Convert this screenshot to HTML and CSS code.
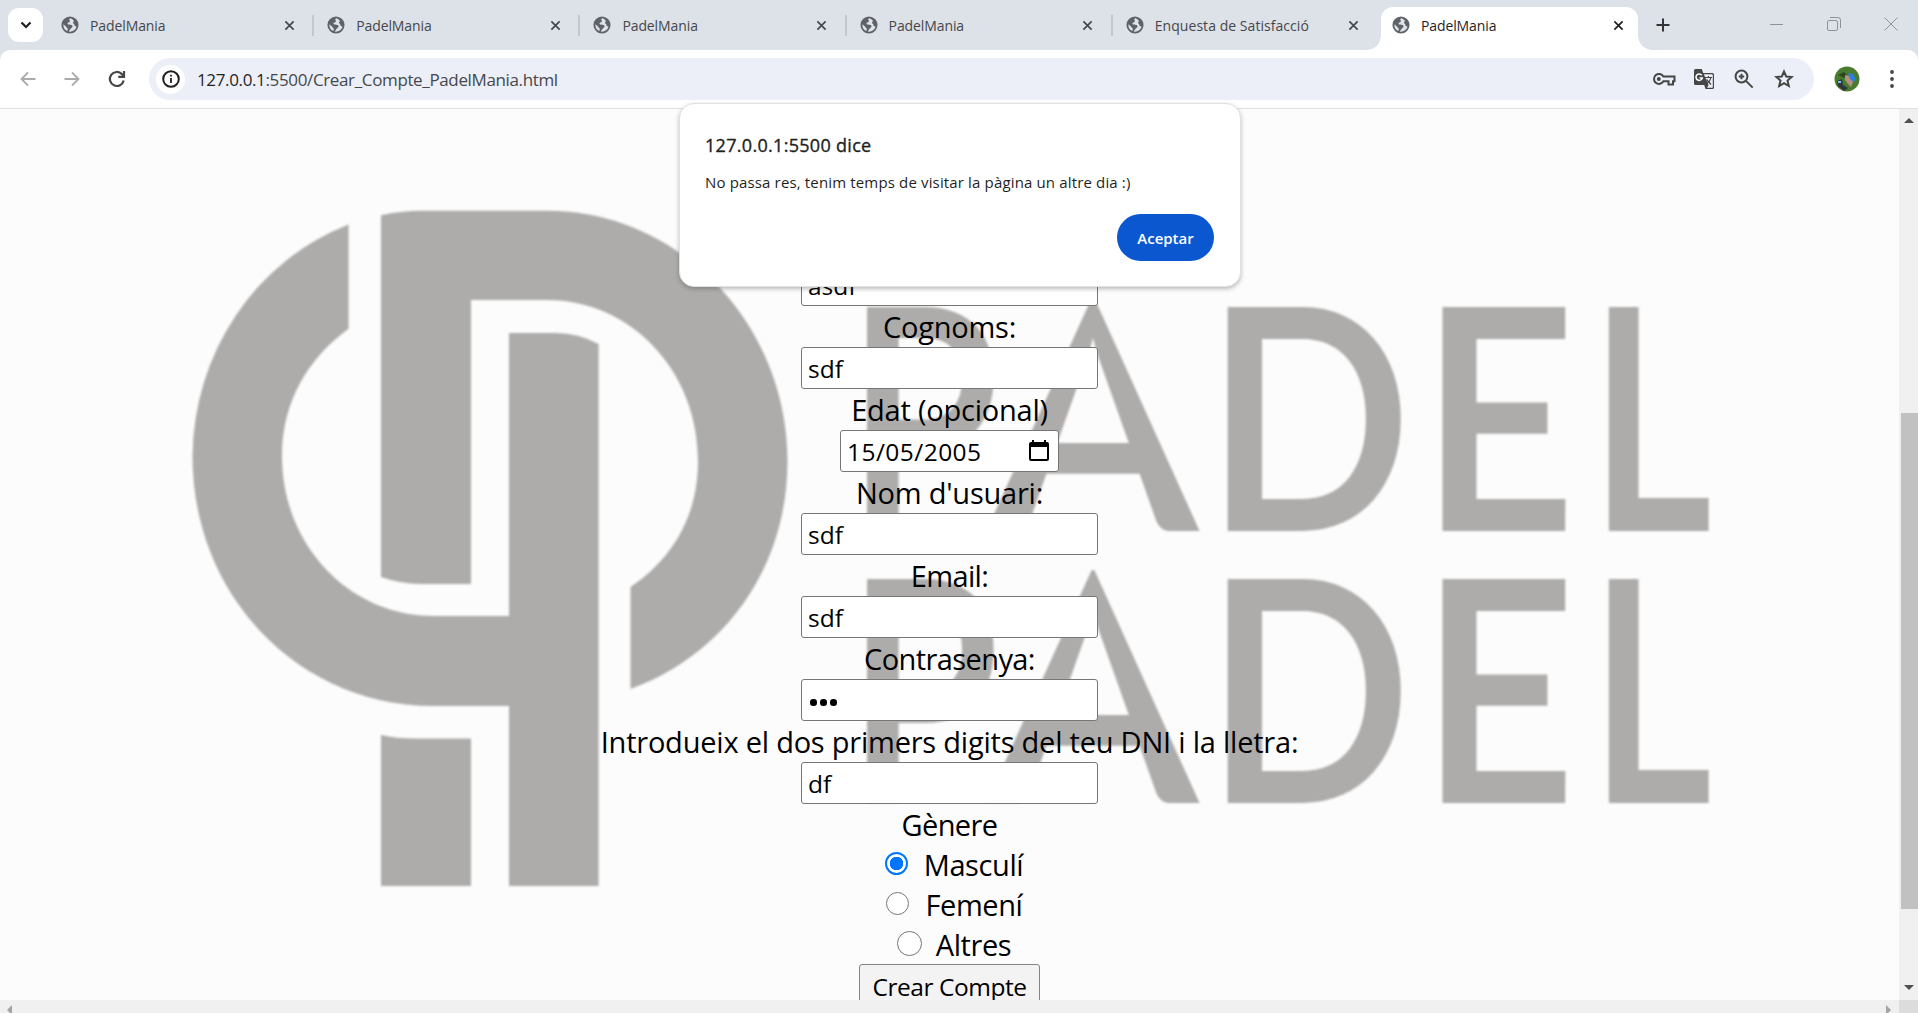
FILE: index.html
```html
<!DOCTYPE html>
<html lang="ca">
<head>
<meta charset="utf-8">
<title>PadelMania</title>
<link rel="stylesheet" href="styles.css">
</head>
<body>
<svg width="0" height="0" class="defs" aria-hidden="true">
  <symbol id="globe" viewBox="0 0 20 20"><circle cx="10" cy="10" r="9.500" fill="#5f6368"/><path d="M10.500 2.500C8 3.500 10.200 5 9.800 6 9.200 7.300 7.300 6.800 7.200 8.300c0 1.700 3 1.200 4.600 1.700 1.500.6 1.200 2.500-.2 3.200-1.200.7-1.400 1.700-2.300 2.900l-.5 1.300c3.800.5 7.500-1.600 8.500-5.400L15.500 11.200c-1-.8-.2-2.200-1.700-2.800-1-.5-.4-1.900.7-2.500C13.300 3.600 12 3 10.500 2.500zM2.700 9.200c-.4 3.500 1.300 6.500 4.500 7.600l.3-2.300c.1-1.300-1.700-1.500-2-2.700z" fill="#dee2e9"/></symbol>
  <symbol id="cross" viewBox="0 0 12 12"><path d="M1.500 1.500l9 9M10.500 1.500l-9 9" stroke="currentColor" stroke-width="1.800" fill="none"/></symbol>
</svg>
<header class="tabstrip">
  <button class="tab-search"><svg width="12" height="8" viewBox="0 0 12 8"><path d="M1.500 1.500L6 6l4.500-4.500" fill="none" stroke="#1f1f1f" stroke-width="2.200"/></svg></button>
  <div class="tab"><svg class="fav"><use href="#globe"/></svg><span>PadelMania</span><svg class="x"><use href="#cross"/></svg></div>
  <div class="tab"><svg class="fav"><use href="#globe"/></svg><span>PadelMania</span><svg class="x"><use href="#cross"/></svg></div>
  <div class="tab"><svg class="fav"><use href="#globe"/></svg><span>PadelMania</span><svg class="x"><use href="#cross"/></svg></div>
  <div class="tab"><svg class="fav"><use href="#globe"/></svg><span>PadelMania</span><svg class="x"><use href="#cross"/></svg></div>
  <div class="tab last"><svg class="fav"><use href="#globe"/></svg><span class="survey">Enquesta de Satisfacció</span><svg class="x"><use href="#cross"/></svg></div>
  <div class="tab active"><svg class="fav"><use href="#globe"/></svg><span>PadelMania</span><svg class="x"><use href="#cross"/></svg></div>
  <svg class="plus" width="14" height="14" viewBox="0 0 14 14"><path d="M7 .5v13M.5 7h13" stroke="#333" stroke-width="2"/></svg>
  <div class="window-controls">
    <svg width="14" height="14" viewBox="0 0 14 14"><path d="M0 7.500h13" stroke="#909295"/></svg>
    <svg width="14" height="14" viewBox="0 0 14 14"><path d="M.5 5a1.500 1.500 0 0 1 1.500-1.500h7A1.500 1.500 0 0 1 10.500 5v7A1.500 1.500 0 0 1 9 13.500H2A1.500 1.500 0 0 1 .5 12zM3 .5h8A2.500 2.500 0 0 1 13.500 3v8" fill="none" stroke="#909295"/></svg>
    <svg width="14" height="14" viewBox="0 0 14 14"><path d="M.5.5l13 13M13.500.5l-13 13" stroke="#909295"/></svg>
  </div>
</header>
<nav class="toolbar">
  <svg class="back" width="16" height="16" viewBox="0 0 16 16"><path d="M15.500 8H2M8 1.500L1.500 8 8 14.500" fill="none" stroke="#a9abad" stroke-width="1.800"/></svg>
  <svg class="fwd" width="16" height="16" viewBox="0 0 16 16"><path d="M.5 8H14M8 1.500L14.500 8 8 14.500" fill="none" stroke="#a9abad" stroke-width="1.800"/></svg>
  <svg class="reload" width="18" height="18" viewBox="0 0 18 18"><path d="M15.700 10.500A7 7 0 1 1 14 4.200L16 6.300M16 1v5.800h-5.800" fill="none" stroke="#444746" stroke-width="2.200"/></svg>
  <div class="omnibox">
    <span class="info"><svg width="18" height="18" viewBox="0 0 18 18"><circle cx="9" cy="9" r="7.800" fill="none" stroke="#1f1f1f" stroke-width="2"/><path d="M9 8v5M9 4.800v1.800" stroke="#1f1f1f" stroke-width="1.800"/></svg></span>
    <span class="url"><b>127.0.0.1</b>:5500/Crear_Compte_PadelMania.html</span>
    <svg class="key" width="24" height="16" viewBox="0 0 24 16"><path d="M11.400 5.500H22.500v4.800h-1.500v3.200h-4.500v-3.200h-5.100A5 5 0 1 1 11.400 5.500z" fill="none" stroke="#444746" stroke-width="2"/><circle cx="6.800" cy="8" r="2" fill="#444746"/></svg>
    <svg class="translate" width="22" height="22" viewBox="0 0 22 22"><path d="M2.500 1h6.300l1.400 4h9.300A1.500 1.500 0 0 1 21 6.500v13a1.500 1.500 0 0 1-1.500 1.500h-7l-1.300-4H2.500A1.500 1.500 0 0 1 1 15.500v-13A1.500 1.500 0 0 1 2.500 1z" fill="#444746"/><path d="M10.800 6.300h8.200a.8.800 0 0 1 .8.800V19a.8.800 0 0 1-.8.800h-5l1.600-2.800z" fill="#eceff8"/><path d="M12 9.500h7M15.500 8v1.500M18 9.500c-.5 2.500-2 4.500-4 6M13.500 11.500l4.500 5" stroke="#444746" fill="none" stroke-width="1.200"/><path d="M8.800 7.300A3.200 3.200 0 1 0 9.300 10H6.500" stroke="#fff" fill="none" stroke-width="1.500"/></svg>
    <svg class="mag" width="20" height="20" viewBox="0 0 20 20"><circle cx="7.500" cy="7.500" r="5.900" fill="none" stroke="#444746" stroke-width="2"/><path d="M11.700 11.700l7 7M7.500 4.800v5.400M4.800 7.500h5.400" stroke="#444746" stroke-width="1.900"/></svg>
    <svg class="star" width="22" height="22" viewBox="0 0 22 22"><path d="M11 3.500l2.200 5 5.400.5-4.100 3.600 1.300 5.400-4.800-2.900-4.800 2.900 1.300-5.400L3.400 9l5.400-.5z" fill="none" stroke="#444746" stroke-width="2"/></svg>
  </div>
  <svg class="avatar" width="26" height="26" viewBox="0 0 26 26"><circle cx="13" cy="13" r="12.500" fill="#4a7c30"/><path d="M4 9l6-3 3 3-3 3z" fill="#2f4423"/><path d="M11 9l4 1 4 6-2 5-3-3-3-4z" fill="#b58f80"/><path d="M14 7l5 1 3 5-2 3-4-3z" fill="#2f80dc"/><path d="M3 15l5-2 1 6 5 3-4 3-6-5z" fill="#31333d"/><path d="M4 15h3v2H4z" fill="#7fc4e6"/></svg>
  <svg class="menu" width="4" height="18" viewBox="0 0 4 18"><circle cx="2" cy="2" r="1.900"/><circle cx="2" cy="9" r="1.900"/><circle cx="2" cy="16" r="1.900"/></svg>
</nav>
<main class="viewport">
  <div class="page">
    <svg class="backdrop" viewBox="0 109 1899 891" width="1899" height="891">
      <defs><clipPath id="peak"><path d="M1093 567L1200 804H986z"/></clipPath></defs>
      <g fill="#adacaa">
        <path d="M348.600 224.400A241 250 0 0 0 192.500 456C192.500 597 300 706 433.600 706H509V886H598.600V344Q578 333 555.600 333H509V616H433.600C350 616 282 546 282 456C282 402 308 358 348.600 328.700z"/>
        <path d="M381 215.300Q401 210.700 421 210.700H547C680 210.700 787.500 325 787.500 461C787.500 570 722 656 630.500 689V587C674 558 698 514 698 461C698 370 630 300 547 300H471V584H421Q399 583.500 381 577z"/>
        <path d="M381 735Q397 738.500 415 738.500H471V886H381z"/>
      </g>
      <g id="wordmark" class="wordmark">
        <text x="847" y="801.500" textLength="152" lengthAdjust="spacingAndGlyphs">P</text>
        <g clip-path="url(#peak)"><text class="tall" x="985" y="803" textLength="216" lengthAdjust="spacingAndGlyphs">A</text></g>
        <text x="1206" y="801.500" textLength="205" lengthAdjust="spacingAndGlyphs">D</text>
        <text x="1421" y="801.500" textLength="154" lengthAdjust="spacingAndGlyphs">E</text>
        <text x="1590" y="801.500" textLength="121" lengthAdjust="spacingAndGlyphs">L</text>
      </g>
      <use href="#wordmark" y="-272"/>
    </svg>
    <form class="signup">
      <div class="field">asdf</div>
      <label>Cognoms:</label>
      <div class="field">sdf</div>
      <label>Edat (opcional)</label>
      <div class="field date"><span>15/05/2005</span><svg width="20" height="22" viewBox="0 0 20 22"><path d="M3 0h2v2h10V0h2v2h1a2 2 0 0 1 2 2v15a2 2 0 0 1-2 2H2a2 2 0 0 1-2-2V4a2 2 0 0 1 2-2h1zM2 7v12h16V7z"/></svg></div>
      <label>Nom d'usuari:</label>
      <div class="field">sdf</div>
      <label class="snug">Email:</label>
      <div class="field">sdf</div>
      <label class="snug">Contrasenya:</label>
      <div class="field dots"><i></i><i></i><i></i></div>
      <label class="dni">Introdueix el dos primers digits del teu DNI i la lletra:</label>
      <div class="field">df</div>
      <label class="genre snug">Gènere</label>
      <div class="option first"><i class="radio on"></i><span>Masculí</span></div>
      <div class="option second"><i class="radio"></i><span>Femení</span></div>
      <div class="option third"><i class="radio big"></i><span>Altres</span></div>
      <button class="submit" type="button">Crear Compte</button>
    </form>
  </div>
  <div class="vbar"><svg width="10" height="5" viewBox="0 0 10 5"><path d="M0 5L5 0l5 5z"/></svg><div class="thumb"></div><svg width="10" height="5" viewBox="0 0 10 5"><path d="M0 0h10L5 5z"/></svg></div>
  <div class="hbar"><svg width="5" height="10" viewBox="0 0 5 10"><path d="M5 0v10L0 5z"/></svg><svg width="5" height="10" viewBox="0 0 5 10"><path d="M0 0v10l5-5z"/></svg></div>
  <div class="corner"></div>
</main>
<section class="dialog">
  <h1>127.0.0.1:5500 dice</h1>
  <p>No passa res, tenim temps de visitar la pàgina un altre dia :)</p>
  <button type="button">Aceptar</button>
</section>
</body>
</html>
```
FILE: styles.css
```css
* { box-sizing: border-box; }
body { margin: 0; width: 1918px; height: 1013px; overflow: hidden; display: flex; flex-direction: column; background: #dde1e8; font-family: "Open Sans", "Noto Sans", sans-serif; color: #000; }
button { font-family: inherit; border: 0; padding: 0; }
svg { flex: none; display: block; }
.defs { position: absolute; }

.tabstrip { height: 50px; flex: none; display: flex; align-items: flex-start; background: #dde1e8; }
.tab-search { width: 35px; height: 34px; margin: 8px 5.500px 0 8px; border-radius: 11px; background: #fff; display: flex; align-items: center; justify-content: center; }
.tab { position: relative; width: 266.2px; height: 36px; margin-top: 7px; padding: 0 20px 0 12.500px; display: flex; align-items: center; color: #45484b; font-size: 14px; letter-spacing: -.1px; }
.tab span { flex: 1; margin-left: 11px; white-space: nowrap; }
.tab .survey { letter-spacing: .05px; }
.tab::after { content: ""; position: absolute; right: .5px; top: 8px; width: 2px; height: 21px; background: #c5c7ca; }
.tab.last::after, .tab.active::after { display: none; }
.fav { width: 18px; height: 18px; }
.x { width: 11px; height: 11px; }
.tab.active { width: 257px; height: 43px; margin-left: 1.500px; padding: 0 13.500px 7px 11px; background: #fff; border-radius: 12px 12px 0 0; color: #1f1f1f; }
.tab.active::before { content: ""; position: absolute; left: -14px; right: -14px; bottom: 0; height: 14px; background: radial-gradient(circle at 0 0, transparent 13.5px, #fff 14px) left / 14px 14px no-repeat, radial-gradient(circle at 100% 0, transparent 13.5px, #fff 14px) right / 14px 14px no-repeat; }
.plus { margin: 18px 0 0 18px; }
.window-controls { margin: 17px 20px 0 auto; display: flex; gap: 43px; }

.toolbar { height: 59px; flex: none; display: flex; align-items: center; background: #fff; border-radius: 10px 10px 0 0; border-bottom: 1px solid #dfe0e2; padding: 0 24px 0 20px; }
.fwd { margin-left: 28px; }
.reload { margin-left: 28px; }
.omnibox { width: 1665px; height: 42px; margin-left: 23px; border-radius: 21px; background: #eceff8; display: flex; align-items: center; padding: 0 19px 0 7px; }
.info { width: 29px; height: 29px; border-radius: 50%; background: #fff; display: flex; align-items: center; justify-content: center; }
.url { margin: 0 auto 0 12px; font-size: 17px; color: #45484b; white-space: nowrap; letter-spacing: -.36px; }
.url b { font-weight: 400; color: #1f1f1f; }
.translate { margin-left: 17px; }
.mag { margin-left: 19px; }
.star { margin-left: 19px; }
.avatar { margin-left: 20px; }
.menu { margin-left: auto; fill: #444746; }

.viewport { flex: 1; display: grid; grid-template-columns: 1899px 19px; grid-template-rows: 891px 13px; }
.page { position: relative; overflow: hidden; background: #fcfcfc; }
.backdrop { position: absolute; inset: 0; filter: blur(.8px); }
.wordmark { font: 600 307px Lato, sans-serif; fill: #adacaa; stroke: #adacaa; stroke-width: 3px; }
.wordmark .tall { font-size: 322px; font-weight: 700; stroke: none; }
.signup { position: relative; display: flex; flex-direction: column; align-items: center; padding-top: 155px; width: 1899px; }
.signup label { height: 41px; line-height: 41px; font-size: 29px; white-space: nowrap; flex: none; letter-spacing: -.22px; }
.signup .genre { height: 40px; }
.signup .snug { letter-spacing: -.6px; }
.field { width: 297px; height: 42px; flex: none; border: 1px solid #767676; border-radius: 3px; background: #fff; padding: 0 6px; line-height: 41px; font-size: 24.500px; }
.date { width: 219px; display: flex; align-items: center; justify-content: space-between; padding-right: 9px; letter-spacing: .45px; }
.dots { display: flex; align-items: center; gap: 3.500px; padding: 5px 8px 0; }
.dots i { width: 6.500px; height: 6.500px; border-radius: 50%; background: #000; }
.option { height: 40px; flex: none; display: flex; align-items: center; font-size: 29px; line-height: 40px; letter-spacing: -.4px; }
.option span { margin-left: 16px; position: relative; top: 1px; }
.radio { width: 23px; height: 23px; border: 1.500px solid #767676; border-radius: 50%; background: #fff; margin-top: -2px; }
.radio.on { border: 2px solid #0075ff; background: radial-gradient(circle, #0075ff 6.500px, #fff 7px); }
.radio.big { width: 25px; height: 25px; }
.first { margin-left: 9px; }
.second { margin-left: 10px; }
.third { margin-left: 9px; }
.third span { margin-left: 14px; }
.submit { width: 181px; height: 44px; flex: none; border: 1px solid #858585; border-radius: 3px; background: #f3f3f3; font-size: 24.500px; letter-spacing: -.45px; color: #000; white-space: nowrap; }
.vbar { background: #f0f0f0; display: flex; flex-direction: column; align-items: center; padding: 9px 0 10px; fill: #505050; }
.thumb { width: 17px; height: 496px; margin: 290px 0 auto 2px; background: #c1c1c1; }
.hbar { background: #f0f0f0; display: flex; justify-content: space-between; padding: 5px 8px 0 7px; overflow: hidden; fill: #a3a3a3; }
.corner { background: #dcdcdc; }

.dialog { position: absolute; left: 679px; top: 103px; width: 562px; height: 184px; border: 1px solid #e0e2e2; border-radius: 15px; background: #fff; box-shadow: 0 2px 4px rgba(60,64,67,.35); padding: 27px 26px 25px 25px; display: flex; flex-direction: column; }
.dialog h1 { margin: 0; font-size: 18px; line-height: 28px; font-weight: 500; letter-spacing: .3px; -webkit-text-stroke: .35px #1f1f1f; color: #1f1f1f; white-space: nowrap; align-self: flex-start; }
.dialog p { margin: 11px 0 0; font-size: 15px; line-height: 24px; letter-spacing: .15px; color: #1f1f1f; white-space: nowrap; align-self: flex-start; }
.dialog button { width: 97px; height: 47px; margin-top: auto; align-self: flex-end; border-radius: 24px; background: #0b57d0; color: #fff; font-size: 15px; font-weight: 600; }
```
